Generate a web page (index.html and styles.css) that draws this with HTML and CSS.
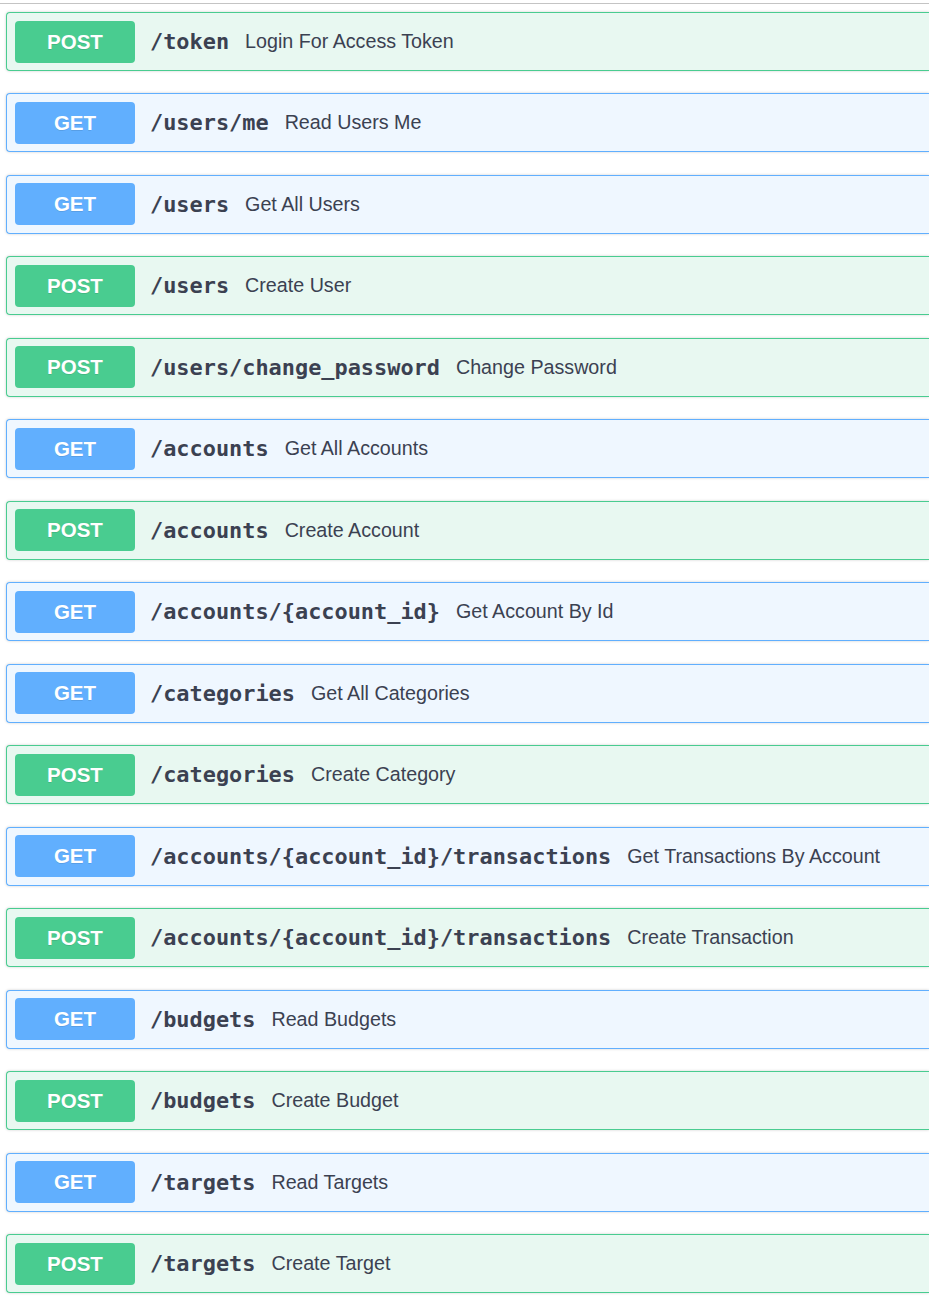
FILE: index.html
```html
<!DOCTYPE html>
<html>
<head>
<meta charset="utf-8">
<link rel="stylesheet" href="styles.css">
</head>
<body>
<div class="tag-line"></div>
<div class="ops">
  <div class="op post"><span class="method">POST</span><span class="path">/token</span><span class="desc">Login For Access Token</span></div>
  <div class="op get"><span class="method">GET</span><span class="path">/users/me</span><span class="desc">Read Users Me</span></div>
  <div class="op get"><span class="method">GET</span><span class="path">/users</span><span class="desc">Get All Users</span></div>
  <div class="op post"><span class="method">POST</span><span class="path">/users</span><span class="desc">Create User</span></div>
  <div class="op post"><span class="method">POST</span><span class="path">/users/change_password</span><span class="desc">Change Password</span></div>
  <div class="op get"><span class="method">GET</span><span class="path">/accounts</span><span class="desc">Get All Accounts</span></div>
  <div class="op post"><span class="method">POST</span><span class="path">/accounts</span><span class="desc">Create Account</span></div>
  <div class="op get"><span class="method">GET</span><span class="path">/accounts/{account_id}</span><span class="desc">Get Account By Id</span></div>
  <div class="op get"><span class="method">GET</span><span class="path">/categories</span><span class="desc">Get All Categories</span></div>
  <div class="op post"><span class="method">POST</span><span class="path">/categories</span><span class="desc">Create Category</span></div>
  <div class="op get"><span class="method">GET</span><span class="path">/accounts/{account_id}/transactions</span><span class="desc">Get Transactions By Account</span></div>
  <div class="op post"><span class="method">POST</span><span class="path">/accounts/{account_id}/transactions</span><span class="desc">Create Transaction</span></div>
  <div class="op get"><span class="method">GET</span><span class="path">/budgets</span><span class="desc">Read Budgets</span></div>
  <div class="op post"><span class="method">POST</span><span class="path">/budgets</span><span class="desc">Create Budget</span></div>
  <div class="op get"><span class="method">GET</span><span class="path">/targets</span><span class="desc">Read Targets</span></div>
  <div class="op post"><span class="method">POST</span><span class="path">/targets</span><span class="desc">Create Target</span></div>
</div>
</body>
</html>
```
FILE: styles.css
```css
html, body {
  margin: 0;
  padding: 0;
  background: #fff;
}
body {
  width: 929px;
  font-family: "Liberation Sans", Arial, sans-serif;
  color: #3b4151;
}
.tag-line {
  height: 3px;
  border-bottom: 1px solid #c4c4c4;
}
.ops {
  padding: 8px 0 0 6px;
}
.op {
  box-sizing: border-box;
  height: 59px;
  margin-bottom: 22.47px;
  border: 1px solid;
  border-right-width: 0;
  border-radius: 4px 0 0 4px;
  box-shadow: 0 0 3px rgba(0,0,0,.19);
  display: flex;
  align-items: center;
  padding: 0 8px;
}
.op.post {
  background: #e8f8f1;
  border-color: #49cc90;
}
.op.get {
  background: #eff7ff;
  border-color: #61affe;
}
.method {
  width: 120px;
  height: 42px;
  border-radius: 4px;
  color: #fff;
  font-weight: 700;
  font-size: 20.5px;
  display: flex;
  align-items: center;
  justify-content: center;
  text-shadow: 0 1px 0 rgba(0,0,0,.1);
  flex: none;
}
.post .method { background: #49cc90; }
.get .method { background: #61affe; }
.path {
  margin-left: 15px;
  font-family: "DejaVu Sans Mono", monospace;
  font-weight: 700;
  font-size: 21.9px;
  color: #3b4151;
}
.desc {
  margin-left: 16px;
  font-size: 19.7px;
  color: #3b4151;
}
```
